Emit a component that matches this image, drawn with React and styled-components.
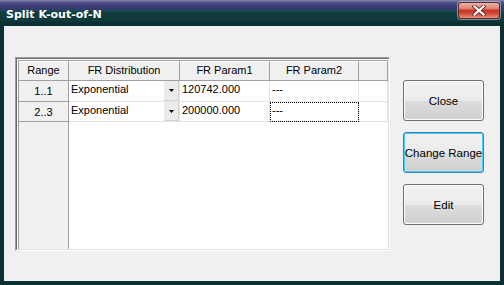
import React from "react";
import styled, { createGlobalStyle } from "styled-components";

const GlobalStyle = createGlobalStyle`
    html, body {
        margin: 0;
        padding: 0;
        background: #0b3034;
    }
    body {
        font-family: "Liberation Sans", Arial, sans-serif;
        font-size: 11px;
        color: #000;
    }
`;

const Window = styled.div`
    width: 504px;
    height: 285px;
    display: flex;
    flex-direction: column;
    background: #0b3034;
    box-sizing: border-box;
    overflow: hidden;
`;

const TitleBar = styled.div`
    height: 26px;
    flex: none;
    display: flex;
    justify-content: space-between;
    align-items: flex-start;
    background: linear-gradient(
        to bottom,
        #8c8cae 0px,
        #6c6c9c 1px,
        #4c4c88 3px,
        #3b3b7a 6px,
        #2f3c6c 9px,
        #1a4850 11px,
        #103c3e 13px,
        #0e3a3c 21px,
        #0b3034 22px
    );
`;

const Title = styled.div`
    margin: 9px 0 0 6px;
    font-family: "DejaVu Sans", "Liberation Sans", sans-serif;
    font-weight: 700;
    font-size: 11px;
    line-height: 12px;
    color: #fff;
`;

const CloseBox = styled.div`
    width: 40px;
    height: 15px;
    margin: 2px 4px 0 0;
    border: 1px solid #5a2a2a;
    border-radius: 3px;
    box-shadow: 0 0 0 1px rgba(255, 255, 255, 0.45);
    background: linear-gradient(
        to bottom,
        #eab4a8 0%,
        #e08878 35%,
        #c8342a 50%,
        #d04a38 70%,
        #e8907c 100%
    );
    display: flex;
    align-items: center;
    justify-content: center;
`;

const Client = styled.div`
    flex: 1;
    margin: 0 4px 4px 4px;
    background: #f0f0f0;
    display: flex;
    align-items: flex-start;
    padding: 31px 0 0 11px;
`;

const GridBox = styled.div`
    width: 375px;
    height: 194px;
    box-sizing: border-box;
    border-top: 1px solid #a0a0a0;
    border-left: 1px solid #a0a0a0;
    border-bottom: 1px solid #ffffff;
    border-right: 1px solid #ffffff;
    flex: none;
`;

const GridInner = styled.div`
    height: 100%;
    box-sizing: border-box;
    border-top: 1px solid #696969;
    border-left: 1px solid #696969;
    border-bottom: 1px solid #e3e3e3;
    border-right: 1px solid #e3e3e3;
    padding: 1px 0 0 1px;
    background: #ffffff;
`;

const Sheet = styled.div`
    height: 100%;
    display: grid;
    grid-template-columns: 50px 111px 90px 89px 1fr;
    grid-template-rows: 20px 21px 20px 1fr;
    border-top: 1px solid #a0a0a0;
    border-left: 1px solid #a0a0a0;
    box-sizing: border-box;
`;

const HeadCell = styled.div`
    background: #f0f0f0;
    border-right: 1px solid #a0a0a0;
    border-bottom: 1px solid #a0a0a0;
    border-top: 1px solid #ffffff;
    text-align: center;
    line-height: 17px;
    white-space: nowrap;
    overflow: hidden;
`;

const RowHead = styled.div`
    background: #f0f0f0;
    border-right: 1px solid #a0a0a0;
    border-bottom: 1px solid #a0a0a0;
    text-align: center;
    line-height: 20px;
`;

const Cell = styled.div`
    position: relative;
    background: #fff;
    border-right: 1px solid #e3e3e3;
    border-bottom: 1px solid #e3e3e3;
    padding-left: 2px;
    line-height: 16px;
    white-space: nowrap;
    overflow: hidden;
    outline: ${(p) => (p.$focus ? "1px dotted #000" : "none")};
    outline-offset: -1px;
`;

const DropButton = styled.span`
    position: absolute;
    top: 0;
    right: 0;
    bottom: 0;
    width: 14px;
    background: #ebebeb;
    border-left: 1px solid #ffffff;
    border-right: 1px solid #d4d4d4;
    border-bottom: 1px solid #d4d4d4;
    display: flex;
    align-items: center;
    justify-content: center;
`;

const FillerHead = styled.div`
    background: #f0f0f0;
    border-right: 1px solid #a0a0a0;
`;

const FillerBody = styled.div`
    grid-column: 2 / 6;
    background: #fff;
`;

const ButtonColumn = styled.div`
    margin: 23px 0 0 13px;
    display: flex;
    flex-direction: column;
    gap: 11px;
`;

const Button = styled.div`
    width: 81px;
    height: 41px;
    box-sizing: border-box;
    border: 1px solid ${(p) => (p.$focused ? "#3c7fb1" : "#707070")};
    border-radius: 3px;
    background: linear-gradient(to bottom, #f2f2f2 0%, #ebebeb 50%, #dddddd 51%, #cfcfcf 100%);
    box-shadow: inset 0 0 0 1px ${(p) => (p.$focused ? "#48d0f8" : "#fcfcfc")};
    display: flex;
    align-items: center;
    justify-content: center;
    font-size: 11.5px;
    color: #000;
`;

const ArrowIcon = () => (
    <svg width="5" height="3" viewBox="0 0 5 3">
        <path d="M0 0 H5 L2.5 3 Z" fill="#000" />
    </svg>
);

const CloseIcon = () => (
    <svg width="14" height="11" viewBox="0 0 14 11">
        <path d="M2.5 1.5 L11.5 9.5 M11.5 1.5 L2.5 9.5" stroke="#6a3030" strokeWidth="4" strokeLinecap="square" />
        <path d="M2.5 1.5 L11.5 9.5 M11.5 1.5 L2.5 9.5" stroke="#ffffff" strokeWidth="2.2" strokeLinecap="square" />
    </svg>
);

const rows = [
    { range: "1..1", dist: "Exponential", p1: "120742.000", p2: "---" },
    { range: "2..3", dist: "Exponential", p1: "200000.000", p2: "---" },
];

const App = () => {
    return (
        <>
            <GlobalStyle />
            <Window>
                <TitleBar>
                    <Title>Split K-out-of-N</Title>
                    <CloseBox>
                        <CloseIcon />
                    </CloseBox>
                </TitleBar>
                <Client>
                    <GridBox>
                        <GridInner>
                            <Sheet>
                                <HeadCell>Range</HeadCell>
                                <HeadCell>FR Distribution</HeadCell>
                                <HeadCell>FR Param1</HeadCell>
                                <HeadCell>FR Param2</HeadCell>
                                <HeadCell />
                                {rows.map((row, i) => (
                                    <React.Fragment key={row.range}>
                                        <RowHead>{row.range}</RowHead>
                                        <Cell>
                                            {row.dist}
                                            <DropButton>
                                                <ArrowIcon />
                                            </DropButton>
                                        </Cell>
                                        <Cell>{row.p1}</Cell>
                                        <Cell $focus={i === 1}>{row.p2}</Cell>
                                        <Cell />
                                    </React.Fragment>
                                ))}
                                <FillerHead />
                                <FillerBody />
                            </Sheet>
                        </GridInner>
                    </GridBox>
                    <ButtonColumn>
                        <Button>Close</Button>
                        <Button $focused>Change Range</Button>
                        <Button>Edit</Button>
                    </ButtonColumn>
                </Client>
            </Window>
        </>
    );
};

export default App;
